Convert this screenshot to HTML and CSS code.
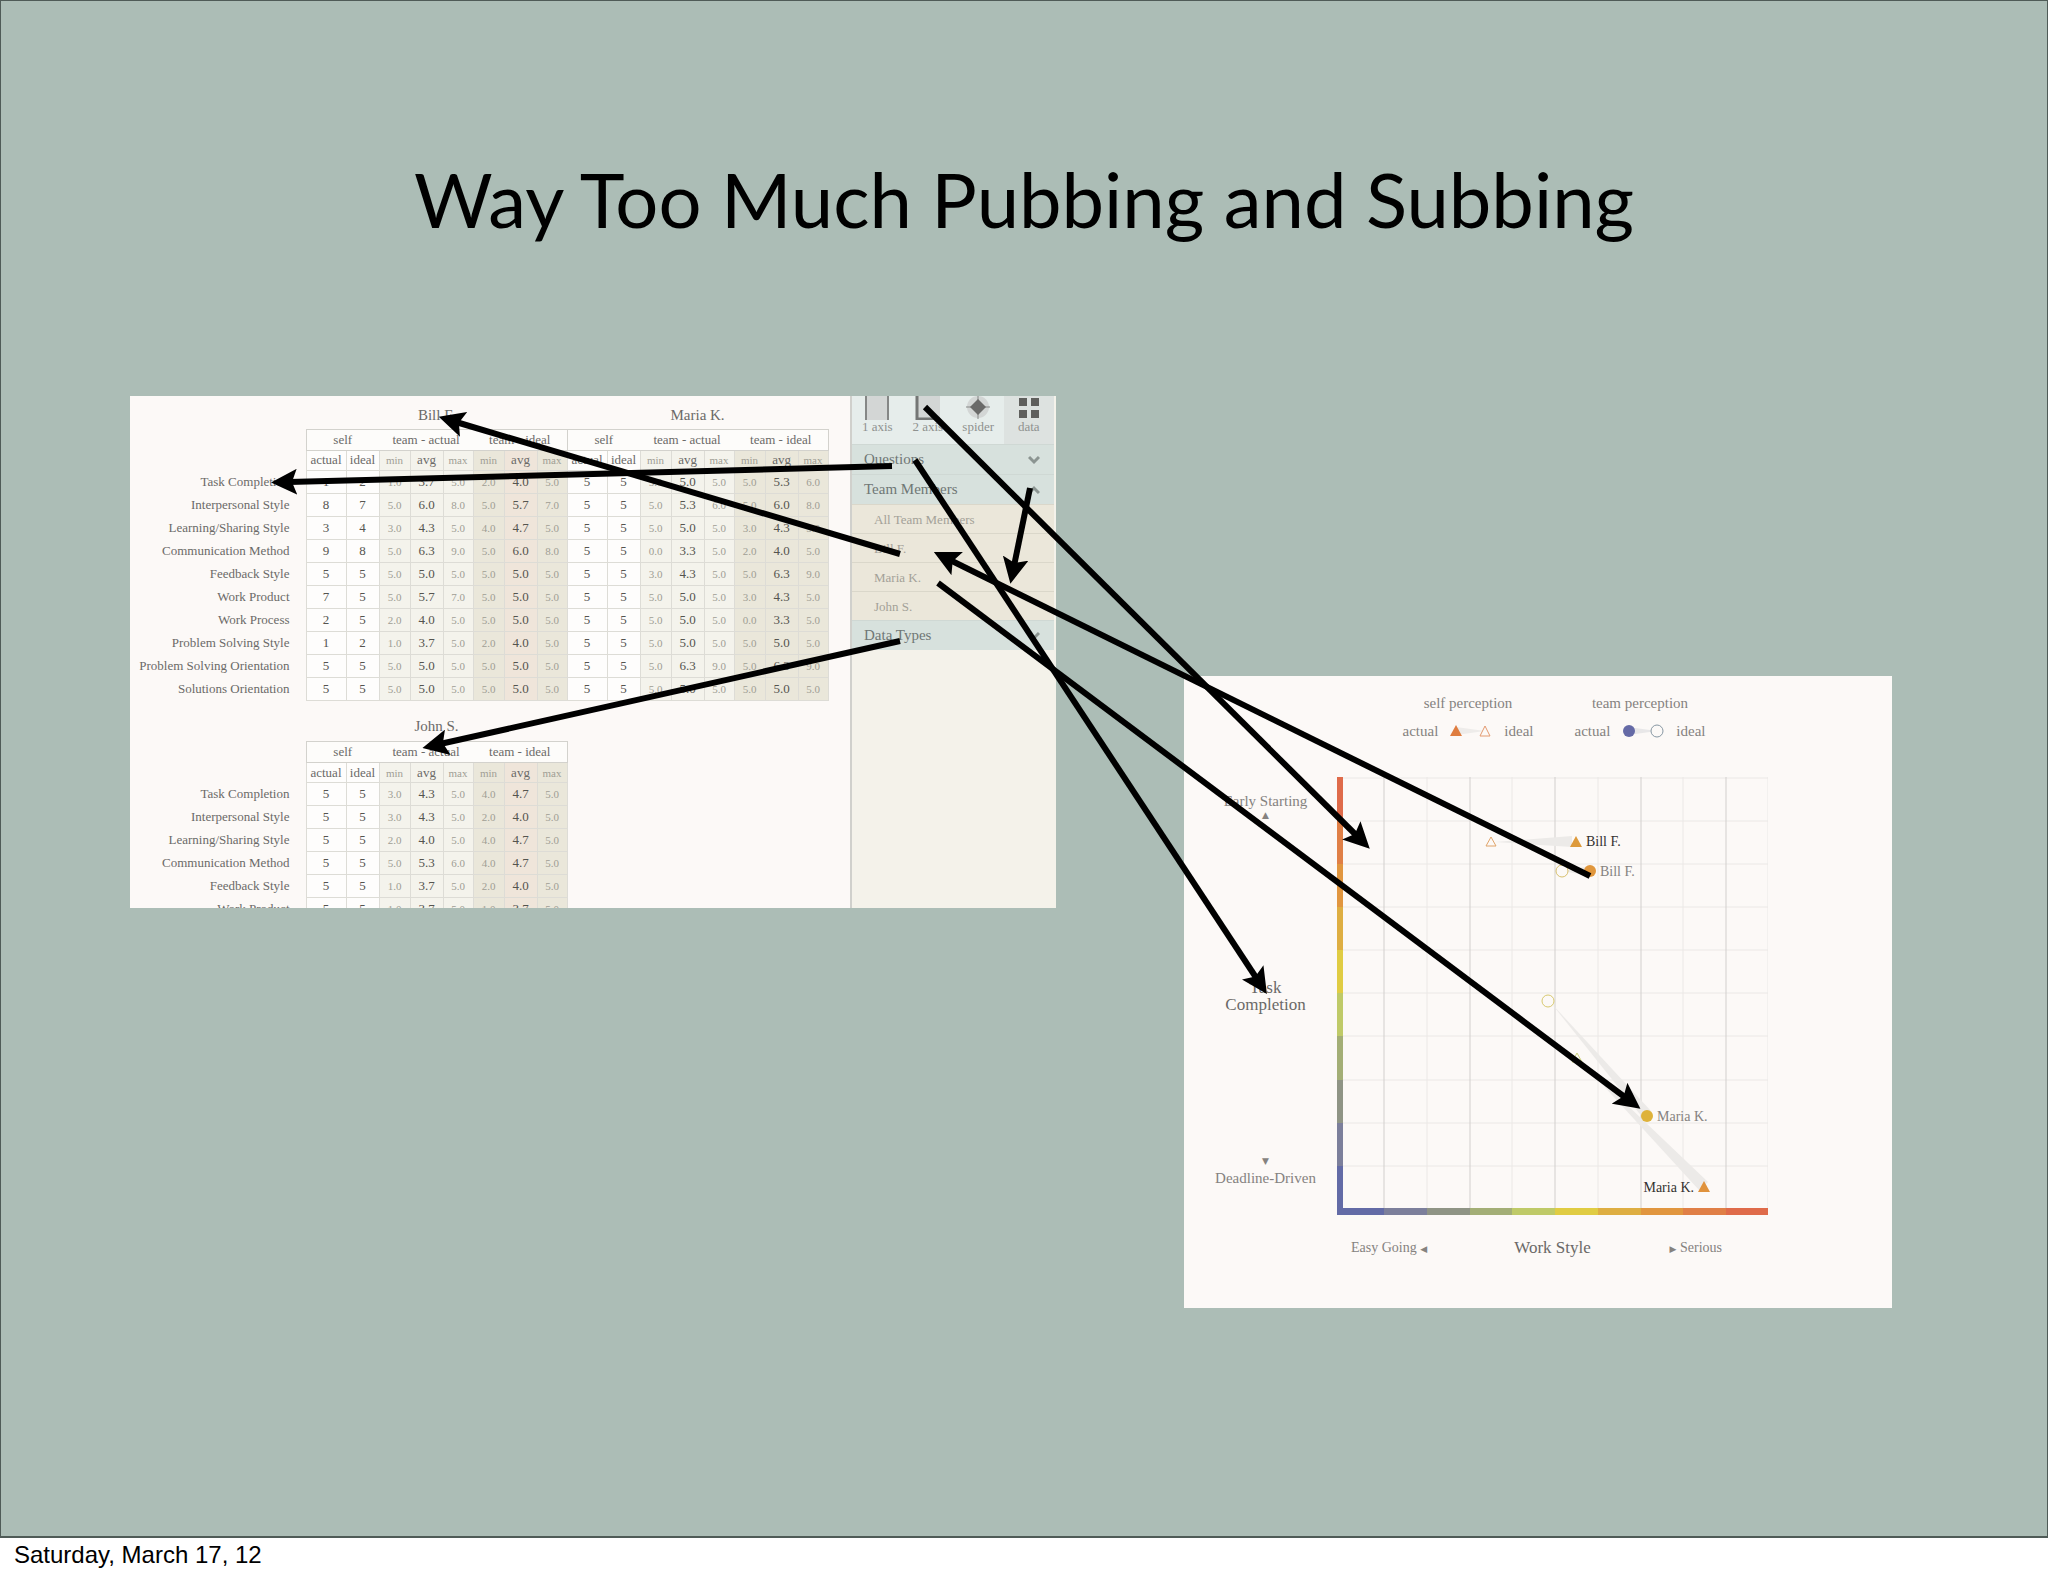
FILE: index.html
```
<!DOCTYPE html>
<html lang="en">
<head>
    <meta charset="UTF-8">
    <title>Way Too Much Pubbing and Subbing</title>
    <link rel="stylesheet" href="styles.css">
</head>
<body>
<main class="slide">
    <h1>Way Too Much Pubbing and Subbing</h1>

    <section class="panel data-panel">
        <div class="tables">
            <table class="scores wide">
                <colgroup>
                    <col class="label">
                    <col class="c-actual"><col class="c-ideal">
                    <col class="c-min team"><col class="c-avg team"><col class="c-max team">
                    <col class="c-min goal"><col class="c-avg goal warm"><col class="c-max goal">
                    <col class="c-actual"><col class="c-ideal">
                    <col class="c-min team"><col class="c-avg team"><col class="c-max team">
                    <col class="c-min goal"><col class="c-avg goal"><col class="c-max goal">
                </colgroup>
                <thead>
                    <tr class="person"><td></td><th colspan="8">Bill F.</th><th colspan="8">Maria K.</th></tr>
                    <tr class="groups"><td></td><th colspan="2" class="first">self</th><th colspan="3">team - actual</th><th colspan="3">team - ideal</th><th colspan="2" class="first">self</th><th colspan="3">team - actual</th><th colspan="3" class="last">team - ideal</th></tr>
                    <tr class="fields"><td></td><th>actual</th><th>ideal</th><th>min</th><th>avg</th><th>max</th><th>min</th><th>avg</th><th>max</th><th>actual</th><th>ideal</th><th>min</th><th>avg</th><th>max</th><th>min</th><th>avg</th><th>max</th></tr>
                </thead>
                <tbody>
                    <tr><th>Task Completion</th><td>1</td><td>2</td><td>1.0</td><td>3.7</td><td>5.0</td><td>2.0</td><td>4.0</td><td>5.0</td><td>5</td><td>5</td><td>5.0</td><td>5.0</td><td>5.0</td><td>5.0</td><td>5.3</td><td>6.0</td></tr>
                    <tr><th>Interpersonal Style</th><td>8</td><td>7</td><td>5.0</td><td>6.0</td><td>8.0</td><td>5.0</td><td>5.7</td><td>7.0</td><td>5</td><td>5</td><td>5.0</td><td>5.3</td><td>6.0</td><td>5.0</td><td>6.0</td><td>8.0</td></tr>
                    <tr><th>Learning/Sharing Style</th><td>3</td><td>4</td><td>3.0</td><td>4.3</td><td>5.0</td><td>4.0</td><td>4.7</td><td>5.0</td><td>5</td><td>5</td><td>5.0</td><td>5.0</td><td>5.0</td><td>3.0</td><td>4.3</td><td>5.0</td></tr>
                    <tr><th>Communication Method</th><td>9</td><td>8</td><td>5.0</td><td>6.3</td><td>9.0</td><td>5.0</td><td>6.0</td><td>8.0</td><td>5</td><td>5</td><td>0.0</td><td>3.3</td><td>5.0</td><td>2.0</td><td>4.0</td><td>5.0</td></tr>
                    <tr><th>Feedback Style</th><td>5</td><td>5</td><td>5.0</td><td>5.0</td><td>5.0</td><td>5.0</td><td>5.0</td><td>5.0</td><td>5</td><td>5</td><td>3.0</td><td>4.3</td><td>5.0</td><td>5.0</td><td>6.3</td><td>9.0</td></tr>
                    <tr><th>Work Product</th><td>7</td><td>5</td><td>5.0</td><td>5.7</td><td>7.0</td><td>5.0</td><td>5.0</td><td>5.0</td><td>5</td><td>5</td><td>5.0</td><td>5.0</td><td>5.0</td><td>3.0</td><td>4.3</td><td>5.0</td></tr>
                    <tr><th>Work Process</th><td>2</td><td>5</td><td>2.0</td><td>4.0</td><td>5.0</td><td>5.0</td><td>5.0</td><td>5.0</td><td>5</td><td>5</td><td>5.0</td><td>5.0</td><td>5.0</td><td>0.0</td><td>3.3</td><td>5.0</td></tr>
                    <tr><th>Problem Solving Style</th><td>1</td><td>2</td><td>1.0</td><td>3.7</td><td>5.0</td><td>2.0</td><td>4.0</td><td>5.0</td><td>5</td><td>5</td><td>5.0</td><td>5.0</td><td>5.0</td><td>5.0</td><td>5.0</td><td>5.0</td></tr>
                    <tr><th>Problem Solving Orientation</th><td>5</td><td>5</td><td>5.0</td><td>5.0</td><td>5.0</td><td>5.0</td><td>5.0</td><td>5.0</td><td>5</td><td>5</td><td>5.0</td><td>6.3</td><td>9.0</td><td>5.0</td><td>6.3</td><td>9.0</td></tr>
                    <tr><th>Solutions Orientation</th><td>5</td><td>5</td><td>5.0</td><td>5.0</td><td>5.0</td><td>5.0</td><td>5.0</td><td>5.0</td><td>5</td><td>5</td><td>5.0</td><td>5.0</td><td>5.0</td><td>5.0</td><td>5.0</td><td>5.0</td></tr>
                </tbody>
            </table>

            <table class="scores">
                <colgroup>
                    <col class="label">
                    <col class="c-actual"><col class="c-ideal">
                    <col class="c-min team"><col class="c-avg team"><col class="c-max team">
                    <col class="c-min goal"><col class="c-avg goal warm"><col class="c-max goal">
                </colgroup>
                <thead>
                    <tr class="person"><td></td><th colspan="8">John S.</th></tr>
                    <tr class="groups"><td></td><th colspan="2" class="first">self</th><th colspan="3">team - actual</th><th colspan="3" class="last">team - ideal</th></tr>
                    <tr class="fields"><td></td><th>actual</th><th>ideal</th><th>min</th><th>avg</th><th>max</th><th>min</th><th>avg</th><th>max</th></tr>
                </thead>
                <tbody>
                    <tr><th>Task Completion</th><td>5</td><td>5</td><td>3.0</td><td>4.3</td><td>5.0</td><td>4.0</td><td>4.7</td><td>5.0</td></tr>
                    <tr><th>Interpersonal Style</th><td>5</td><td>5</td><td>3.0</td><td>4.3</td><td>5.0</td><td>2.0</td><td>4.0</td><td>5.0</td></tr>
                    <tr><th>Learning/Sharing Style</th><td>5</td><td>5</td><td>2.0</td><td>4.0</td><td>5.0</td><td>4.0</td><td>4.7</td><td>5.0</td></tr>
                    <tr><th>Communication Method</th><td>5</td><td>5</td><td>5.0</td><td>5.3</td><td>6.0</td><td>4.0</td><td>4.7</td><td>5.0</td></tr>
                    <tr><th>Feedback Style</th><td>5</td><td>5</td><td>1.0</td><td>3.7</td><td>5.0</td><td>2.0</td><td>4.0</td><td>5.0</td></tr>
                    <tr><th>Work Product</th><td>5</td><td>5</td><td>1.0</td><td>3.7</td><td>5.0</td><td>1.0</td><td>3.7</td><td>5.0</td></tr>
                </tbody>
            </table>
        </div>

        <aside class="sidebar">
            <div class="tabs">
                <button type="button">
                    <svg width="26" height="24" viewBox="0 0 26 24"><rect x="1" width="24" height="24" fill="#d3d6d5"/><path d="M2 0V24M24 0V24" stroke="#858786" stroke-width="2"/></svg>
                    1 axis
                </button>
                <button type="button">
                    <svg width="26" height="24" viewBox="0 0 26 24"><rect x="1" width="24" height="24" fill="#d3d6d5"/><path d="M2 0V23H25" stroke="#747675" stroke-width="3" fill="none"/></svg>
                    2 axis
                </button>
                <button type="button">
                    <svg width="26" height="24" viewBox="0 0 26 24"><circle cx="13" cy="11" r="11" fill="#d3d6d5"/><path d="M1 11H25M13 0V23" stroke="#858786"/><path d="M13 3L21 11L13 19L5 11Z" fill="#6a6a69"/></svg>
                    spider
                </button>
                <button type="button" class="active">
                    <svg width="26" height="24" viewBox="0 0 26 24"><path d="M3 2h8v8H3zM15 2h8v8h-8zM3 14h8v8H3zM15 14h8v8h-8z" fill="#5f5f5d"/></svg>
                    data
                </button>
            </div>
            <button type="button" class="section-head">Questions
                <svg width="12" height="10" viewBox="0 0 12 10"><path d="M1 2L6 7L11 2"/></svg>
            </button>
            <button type="button" class="section-head">Team Members
                <svg width="12" height="10" viewBox="0 0 12 10"><path d="M1 8L6 3L11 8"/></svg>
            </button>
            <nav>
                <a href="#">All Team Members</a>
                <a href="#">Bill F.</a>
                <a href="#">Maria K.</a>
                <a href="#">John S.</a>
            </nav>
            <button type="button" class="section-head">Data Types
                <svg width="12" height="10" viewBox="0 0 12 10"><path d="M1 2L6 7L11 2"/></svg>
            </button>
        </aside>
    </section>

    <section class="panel chart-panel">
        <div class="legend">
            <div class="legend-group">
                <h2>self perception</h2>
                <p>
                    <span>actual</span>
                    <svg width="42" height="14" viewBox="0 0 42 14"><path d="M6 3L35 7L6 11Z" fill="#eeecea"/><path d="M6 1L12 12H0Z" fill="#df7d40"/><path d="M35 2L40 12H30Z" fill="#fcf9f7" stroke="#e39a70"/></svg>
                    <span>ideal</span>
                </p>
            </div>
            <div class="legend-group">
                <h2>team perception</h2>
                <p>
                    <span>actual</span>
                    <svg width="42" height="14" viewBox="0 0 42 14"><path d="M6 3L35 7L6 11Z" fill="#e8e7e8"/><circle cx="7" cy="7" r="6" fill="#656aa6"/><circle cx="35" cy="7" r="6" fill="#fcf9f7" stroke="#8797a3"/></svg>
                    <span>ideal</span>
                </p>
            </div>
        </div>

        <div class="y-axis">
            <span class="end">Early Starting <i>&#9650;</i></span>
            <strong>Task<br>Completion</strong>
            <span class="end"><i>&#9660;</i> Deadline-Driven</span>
        </div>

        <svg class="plot" viewBox="0 0 431 438">
            <g class="grid">
                <path d="M6 1H431M6 44H431M6 87H431M6 130H431M6 173H431M6 216H431M6 259H431M6 303H431M6 346H431M6 389H431M90 0V431M175 0V431M261 0V431M346 0V431M431 0V431"/>
                <path class="major" d="M47 0V431M133 0V431M218 0V431M304 0V431M389 0V431"/>
            </g>
            <g class="trails">
                <path d="M158 65L235 59V70Z"/>
                <path d="M225 94L253 89V99Z"/>
                <path d="M214 226L314 334L306 341Z"/>
                <path d="M243 283L371 405L362 413Z"/>
            </g>
            <g class="scale">
                <rect x="0" y="0" width="6" height="44" fill="#df6b4a"/>
                <rect x="0" y="44" width="6" height="43" fill="#e07f46"/>
                <rect x="0" y="87" width="6" height="43" fill="#e1963f"/>
                <rect x="0" y="130" width="6" height="43" fill="#deae42"/>
                <rect x="0" y="173" width="6" height="43" fill="#e0cc43"/>
                <rect x="0" y="216" width="6" height="43" fill="#bfca68"/>
                <rect x="0" y="259" width="6" height="44" fill="#a3ae76"/>
                <rect x="0" y="303" width="6" height="43" fill="#8f9485"/>
                <rect x="0" y="346" width="6" height="43" fill="#7c7f9b"/>
                <rect x="0" y="389" width="6" height="49" fill="#636ba6"/>
                <rect x="0" y="431" width="47" height="7" fill="#636ba6"/>
                <rect x="47" y="431" width="43" height="7" fill="#7c7f9b"/>
                <rect x="90" y="431" width="43" height="7" fill="#8f9485"/>
                <rect x="133" y="431" width="42" height="7" fill="#a3ae76"/>
                <rect x="175" y="431" width="43" height="7" fill="#bfca68"/>
                <rect x="218" y="431" width="43" height="7" fill="#e0cc43"/>
                <rect x="261" y="431" width="43" height="7" fill="#deae42"/>
                <rect x="304" y="431" width="42" height="7" fill="#e1963f"/>
                <rect x="346" y="431" width="43" height="7" fill="#e07f46"/>
                <rect x="389" y="431" width="42" height="7" fill="#df6b4a"/>
            </g>
            <path d="M154 60L159 69H149Z" fill="#fcf9f7" stroke="#e0a46a"/>
            <path d="M239 59L245 70H233Z" fill="#dd9a3b"/>
            <circle cx="225" cy="94" r="6" fill="#fcf9f7" stroke="#d8c06e"/>
            <circle cx="253" cy="94" r="6" fill="#e0963c"/>
            <circle cx="211" cy="224" r="6" fill="#fcf9f7" stroke="#d8c970"/>
            <path d="M240 276L245 285H235Z" fill="#fcf9f7" stroke="#ccd07c"/>
            <circle cx="310" cy="339" r="6" fill="#deb23a"/>
            <path d="M367 404L373 415H361Z" fill="#e0923c"/>
            <text class="self" x="249" y="69">Bill F.</text>
            <text x="263" y="99">Bill F.</text>
            <text x="320" y="344">Maria K.</text>
            <text class="self" x="357" y="415" text-anchor="end">Maria K.</text>
        </svg>

        <div class="x-axis">
            <span>Easy Going <i>&#9664;</i></span>
            <strong>Work Style</strong>
            <span><i>&#9654;</i> Serious</span>
        </div>
    </section>

    <svg class="arrows" viewBox="0 0 2048 1538" preserveAspectRatio="none">
        <defs>
            <marker id="head" markerUnits="userSpaceOnUse" markerWidth="26" markerHeight="26" refX="8" refY="13" orient="auto">
                <path d="M0 0L26 13L0 26L5 13Z"/>
            </marker>
        </defs>
        <path d="M925 407L1357 836"/>
        <path d="M892 466L289 482"/>
        <path d="M915 460L1257 979"/>
        <path d="M900 554L456 422"/>
        <path d="M1030 488L1014 566"/>
        <path d="M900 641L440 744"/>
        <path d="M1590 876L950 560"/>
        <path d="M938 583L1626 1098"/>
    </svg>
</main>

<footer>Saturday, March 17, 12</footer>
</body>
</html>
```
FILE: styles.css
```
body {
    margin: 0;
    background-color: #fff;
    font-family: "Liberation Serif", "Times New Roman", serif;
    color: #6b6a68;
}

button {
    border: none;
    background: none;
    padding: 0;
    font-family: inherit;
    cursor: pointer;
}

a {
    text-decoration: none;
    color: inherit;
}

/* slide: rows and columns keep the slide's proportions */
.slide {
    position: relative;
    box-sizing: border-box;
    aspect-ratio: 2048 / 1538;
    display: grid;
    grid-template-columns: 130fr 926fr 128fr 708fr 156fr;
    grid-template-rows: 396fr 280fr 232fr 400fr 230fr;
    background-color: #acbdb6;
    box-shadow: inset 0 0 0 1px #4f5b57, inset 0 -2px 0 #4f5b57;
}

h1 {
    grid-column: 1 / -1;
    grid-row: 1;
    align-self: center;
    margin: 0;
    text-align: center;
    font-family: Lato, "Gill Sans", sans-serif;
    font-size: 76px;
    font-weight: normal;
    color: #000;
}

.panel {
    min-width: 0;
    min-height: 0;
    overflow: hidden;
    background-color: #fcf9f7;
}

.data-panel {
    grid-column: 2;
    grid-row: 2 / 4;
    display: flex;
}

.chart-panel {
    grid-column: 4;
    grid-row: 3 / 5;
    display: grid;
    grid-template-columns: 153fr 431fr 124fr;
    grid-template-rows: 101fr 438fr 93fr;
}

/* score tables */
.tables {
    flex: 1;
    min-width: 0;
}

.scores {
    table-layout: fixed;
    border-collapse: collapse;
    width: 437px;
    font-size: 13px;
    line-height: 16px;
}

.scores.wide {
    width: 698px;
}

.label { width: 176px; }
.c-actual { width: 40px; background-color: #fefdfc; }
.c-ideal { width: 33px; background-color: #fefdfc; }
.c-min { width: 31px; }
.c-avg { width: 33px; }
.c-max { width: 30px; }
.team { background-color: #f4f3ec; }
.goal { background-color: #eae7da; }
.goal.warm { background-color: #efe5da; }

.scores th,
.scores td {
    padding: 0;
    font-weight: normal;
    text-align: center;
}

.scores tbody tr {
    height: 23px;
}

.scores tbody th {
    padding-right: 16px;
    text-align: right;
    white-space: nowrap;
}

.scores tbody td,
.fields th {
    border: 1px solid #dddcd6;
}

.scores tbody td {
    color: #55544f;
}

.person {
    height: 41px;
    font-size: 15px;
}

.wide .person {
    height: 33px;
}

.scores .person th,
.scores .person td {
    background-color: #fcf9f7;
}

.scores .person th {
    padding-top: 10px;
}

.scores.wide .person th {
    padding-top: 6px;
}

.groups {
    height: 21px;
}

.fields {
    height: 20px;
}

.groups th {
    background-color: #fdfcfa;
    border-top: 1px solid #d3d2cd;
    border-bottom: 1px solid #d3d2cd;
}

.groups .first {
    border-left: 1px solid #d3d2cd;
}

.groups .last {
    border-right: 1px solid #d3d2cd;
}

.fields th:nth-child(8n+4),
.fields th:nth-child(8n+6),
.fields th:nth-child(8n+7),
.fields th:nth-child(8n+9),
.scores tbody td:nth-child(8n+4),
.scores tbody td:nth-child(8n+6),
.scores tbody td:nth-child(8n+7),
.scores tbody td:nth-child(8n+9) {
    font-size: 11px;
    color: #a09e94;
}

/* sidebar */
.sidebar {
    box-sizing: border-box;
    width: 206px;
    padding-right: 2px;
    border-left: 2px solid #d0d0cc;
    background-color: #f4f2ea;
}

.tabs {
    display: flex;
    height: 48px;
    background-color: #e6edeb;
}

.tabs button {
    flex: 1;
    display: flex;
    flex-direction: column;
    align-items: center;
    font-size: 13px;
    line-height: 14px;
    color: #8f9290;
}

.tabs .active {
    background-color: #dde2e0;
}

.section-head {
    box-sizing: border-box;
    display: flex;
    justify-content: space-between;
    align-items: center;
    width: 100%;
    height: 30px;
    padding: 0 14px 0 12px;
    border-top: 1px solid #cfd8d4;
    background-color: #d7e1dd;
    font-size: 15px;
    color: #6f7775;
}

.section-head svg {
    fill: none;
    stroke: #8b9491;
    stroke-width: 3;
}

.sidebar nav a {
    box-sizing: border-box;
    display: block;
    height: 29px;
    padding-left: 22px;
    border-top: 1px solid #dad7ca;
    background-color: #ebe7da;
    font-size: 13px;
    line-height: 29px;
    color: #a3a198;
}

/* perception chart */
.legend {
    grid-column: 1 / -1;
    display: flex;
    justify-content: center;
    gap: 41px;
    padding: 17px 0 0 32px;
    font-size: 15px;
    line-height: 20px;
    color: #85827f;
}

.legend h2 {
    margin: 0 0 8px;
    font-size: 15px;
    font-weight: normal;
    text-align: center;
}

.legend p {
    display: flex;
    align-items: center;
    gap: 12px;
    margin: 0;
}

.y-axis {
    display: flex;
    flex-direction: column;
    align-items: center;
    justify-content: space-between;
    padding: 16px 0 28px 10px;
    font-size: 15px;
    text-align: center;
    color: #85827f;
}

.y-axis .end i {
    display: block;
}

.y-axis i,
.x-axis i {
    font-family: "DejaVu Sans", sans-serif;
    font-size: 9px;
    font-style: normal;
}

.y-axis strong,
.x-axis strong {
    font-size: 17px;
    font-weight: normal;
    line-height: 17px;
    color: #6b6967;
}

.y-axis strong {
    padding-top: 16px;
}

.y-axis .end:last-child i {
    margin-bottom: 4px;
}

.plot {
    width: 100%;
    height: 100%;
    font-size: 14px;
}

.plot text {
    fill: #85827f;
}

.plot .self {
    fill: #33312f;
}

.grid path {
    fill: none;
    stroke: #ebe8e6;
}

.grid .major {
    stroke: #d2cfcd;
}

.trails {
    fill: #eceae8;
}

.x-axis {
    grid-column: 2;
    display: grid;
    grid-template-columns: 1fr auto 1fr;
    align-items: start;
    padding: 24px 0;
    font-size: 14px;
    line-height: 17px;
    color: #85827f;
}

.x-axis span:first-child {
    padding-left: 14px;
}

.x-axis span:last-child {
    padding-right: 46px;
    text-align: right;
}

/* arrows lie over both panels */
.arrows {
    position: absolute;
    top: 0;
    left: 0;
    width: 100%;
    height: 100%;
    pointer-events: none;
}

.arrows > path {
    stroke: #000;
    stroke-width: 6;
    fill: none;
    marker-end: url(#head);
}

footer {
    height: 38px;
    padding-left: 14px;
    font-family: "Liberation Sans", Arial, sans-serif;
    font-size: 24px;
    line-height: 34px;
    color: #000;
}
```
